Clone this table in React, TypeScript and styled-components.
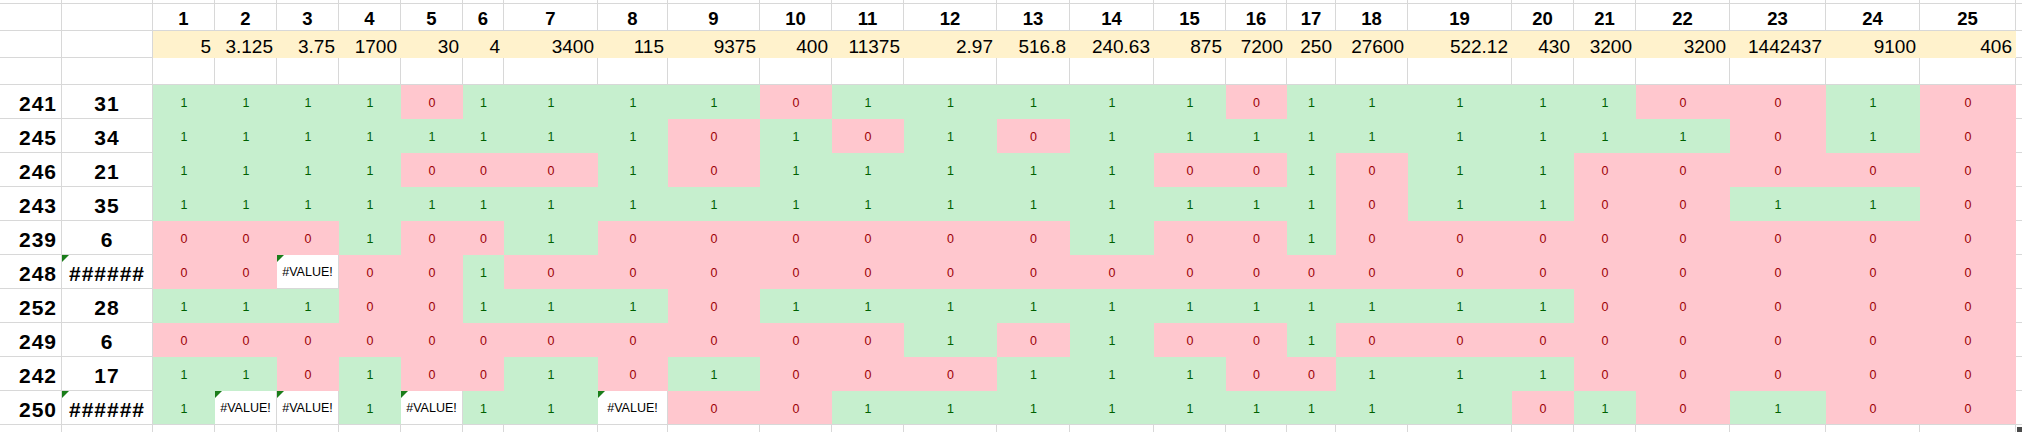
import React from 'react';
import styled, { createGlobalStyle, css } from 'styled-components';

const GRID = '#d8d8d8';

const GlobalStyle = createGlobalStyle`
  html, body { margin: 0; padding: 0; background: #ffffff; overflow: hidden; }
  body { font-family: "Liberation Sans", Arial, sans-serif; }
`;

/* column widths: A, B, data 1..25, trailing */
const COL_WIDTHS = [
  62, 91,
  62, 62, 62, 62, 62, 41, 94, 70, 92, 72, 72, 93, 73, 84, 72, 61, 49, 72, 104, 62, 62, 94, 96, 94, 96,
  140,
];

const RATES = [
  '5', '3.125', '3.75', '1700', '30', '4', '3400', '115', '9375', '400', '11375', '2.97', '516.8',
  '240.63', '875', '7200', '250', '27600', '522.12', '430', '3200', '3200', '1442437', '9100', '406',
];

type Row = { id: string; score: string; cells: string };

const ROWS: Row[] = [
  { id: '241', score: '31', cells: '111101111' + '011111011' + '1110010' },
  { id: '245', score: '34', cells: '111111110' + '101011111' + '1111010' },
  { id: '246', score: '21', cells: '111100010' + '111110010' + '1100000' },
  { id: '243', score: '35', cells: '111111111' + '111111110' + '1100110' },
  { id: '239', score: '6', cells: '000100100' + '000010010' + '0000000' },
  { id: '248', score: '######', cells: '00E001000' + '000000000' + '0000000' },
  { id: '252', score: '28', cells: '111001110' + '111111111' + '1100000' },
  { id: '249', score: '6', cells: '000000000' + '001010010' + '0000000' },
  { id: '242', score: '17', cells: '110100101' + '000111001' + '1100000' },
  { id: '250', score: '######', cells: '1EE1E11E0' + '011111111' + '1010100' },
];

const Viewport = styled.div`
  position: relative;
  width: 2022px;
  height: 432px;
  overflow: hidden;
  background: #ffffff;
`;

const Sheet = styled.div`
  display: grid;
  grid-template-columns: ${COL_WIDTHS.map((w) => `${w}px`).join(' ')};
  grid-template-rows: 4px 27px 27px 27px repeat(10, 34px) 30px;
`;

const cellBase = css`
  box-sizing: border-box;
  min-width: 0;
  overflow: hidden;
  white-space: nowrap;
  display: flex;
  line-height: 1;
  color: #000000;
`;

const gridLines = css`
  background: #ffffff;
  border-right: 1px solid ${GRID};
  border-bottom: 1px solid ${GRID};
`;

const BlankCell = styled.div`
  ${cellBase};
  ${gridLines};
`;

const TailCell = styled.div`
  ${cellBase};
  background: #ffffff;
  border-right: 1px solid ${GRID};
  box-shadow: 0 -1px 0 ${GRID};
`;

const HeaderCell = styled.div`
  ${cellBase};
  ${gridLines};
  justify-content: center;
  align-items: flex-end;
  padding-bottom: 2px;
  font-weight: 700;
  font-size: 18.5px;
`;

const RateCell = styled.div`
  ${cellBase};
  background: #fff2cc;
  justify-content: flex-end;
  align-items: flex-end;
  padding: 0 4px 2px 0;
  font-size: 19px;
`;

const LabelCell = styled.div<{ $align: 'right' | 'center' }>`
  ${cellBase};
  ${gridLines};
  position: relative;
  justify-content: ${(p) => (p.$align === 'right' ? 'flex-end' : 'center')};
  align-items: flex-end;
  padding: 0 ${(p) => (p.$align === 'right' ? '4px' : '0')} 4px 0;
  font-weight: 700;
  font-size: 21px;
  letter-spacing: 1px;
`;

const FlagCell = styled.div<{ $on: boolean }>`
  ${cellBase};
  justify-content: center;
  align-items: center;
  padding-top: 2px;
  font-size: 12.5px;
  background: ${(p) => (p.$on ? '#c6efce' : '#ffc7ce')};
  color: ${(p) => (p.$on ? '#006100' : '#9c0006')};
`;

const ErrorCell = styled.div`
  ${cellBase};
  ${gridLines};
  position: relative;
  justify-content: center;
  align-items: center;
  padding-top: 2px;
  font-size: 12.5px;
`;

const ErrorMark = styled.span`
  position: absolute;
  top: 0;
  left: 0;
  width: 0;
  height: 0;
  border-top: 7px solid #1a7d1a;
  border-right: 7px solid transparent;
`;

const FillHandle = styled.div`
  position: absolute;
  left: 2017px;
  top: 427px;
  width: 6px;
  height: 6px;
  background: #4a4a4a;
`;

const DATA_COUNT = 25;
const TOTAL_COLS = COL_WIDTHS.length;

function blanks(n: number, key: string, Tail = false) {
  const C = Tail ? TailCell : BlankCell;
  return Array.from({ length: n }, (_, i) => <C key={`${key}-${i}`} />);
}

export default function App() {
  return (
    <>
      <GlobalStyle />
      <Viewport>
        <Sheet>
          {/* partial top row */}
          {blanks(TOTAL_COLS, 'r0')}

          {/* header numbers */}
          <BlankCell />
          <BlankCell />
          {Array.from({ length: DATA_COUNT }, (_, i) => (
            <HeaderCell key={`h-${i}`}>{i + 1}</HeaderCell>
          ))}
          <BlankCell />

          {/* rates */}
          <BlankCell />
          <BlankCell />
          {RATES.map((r, i) => (
            <RateCell key={`rate-${i}`}>{r}</RateCell>
          ))}
          <BlankCell />

          {/* empty row */}
          {blanks(TOTAL_COLS, 'r3')}

          {/* data rows */}
          {ROWS.map((row) => (
            <React.Fragment key={row.id}>
              <LabelCell $align="right">{row.id}</LabelCell>
              <LabelCell $align="center">
                {row.score.startsWith('#') && <ErrorMark />}
                {row.score}
              </LabelCell>
              {row.cells.split('').map((c, i) =>
                c === 'E' ? (
                  <ErrorCell key={`${row.id}-${i}`}>
                    <ErrorMark />
                    #VALUE!
                  </ErrorCell>
                ) : (
                  <FlagCell key={`${row.id}-${i}`} $on={c === '1'}>
                    {c}
                  </FlagCell>
                ),
              )}
              <BlankCell />
            </React.Fragment>
          ))}

          {/* partial bottom row */}
          {blanks(TOTAL_COLS, 'r14', true)}
        </Sheet>
        <FillHandle />
      </Viewport>
    </>
  );
}
